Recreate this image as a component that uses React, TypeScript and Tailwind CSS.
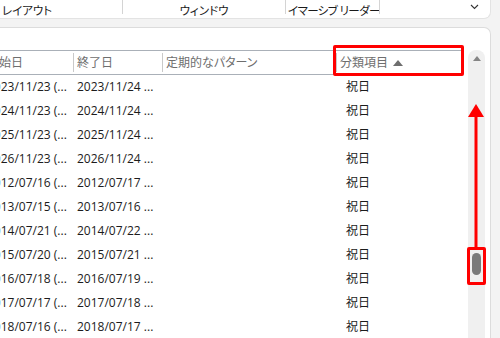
import React from 'react';

const rows = [
  ['2023/11/23', '2023/11/24'],
  ['2024/11/23', '2024/11/24'],
  ['2025/11/23', '2025/11/24'],
  ['2026/11/23', '2026/11/24'],
  ['2012/07/16', '2012/07/17'],
  ['2013/07/15', '2013/07/16'],
  ['2014/07/21', '2014/07/22'],
  ['2015/07/20', '2015/07/21'],
  ['2016/07/18', '2016/07/19'],
  ['2017/07/17', '2017/07/18'],
  ['2018/07/16', '2018/07/17'],
];

const font = "font-['Open_Sans','Noto_Sans_CJK_JP',sans-serif] [font-feature-settings:'palt']";

const HeaderCell = ({ label, w, divider = true, children }: { label: string; w: string; divider?: boolean; children?: React.ReactNode }) => (
  <div className={`${w} h-full flex items-center shrink-0`}>
    {divider ? <div className="w-px h-[19px] bg-[#c9c9c9]" /> : <div className="w-px" />}
    <span className="pl-[3px] text-[#6e6e6e] whitespace-nowrap">{label}</span>
    {children}
  </div>
);

export default function App() {
  return (
    <div className={`w-[500px] h-[338px] overflow-hidden bg-[#f3f3f3] relative text-[12px] ${font}`}>
      {/* ribbon tail */}
      <div className="w-[491px] h-[19px] bg-white rounded-br-[7px] border-b border-r border-[#e3e3e3] flex items-start text-[#1a1a1a] text-[11.5px]">
        <div className="w-[122px] pl-[2px] pt-[3px] leading-[15px]">レイアウト</div>
        <div className="w-px h-[14px] bg-[#d4d4d4]" />
        <div className="w-[162px] text-center pt-[3px] leading-[15px]">ウィンドウ</div>
        <div className="w-px h-[14px] bg-[#d4d4d4]" />
        <div className="w-[93px] pl-[2px] pt-[3px] leading-[15px] whitespace-nowrap tracking-[-0.6px] overflow-hidden">イマーシブ リーダー</div>
        <div className="w-px h-[14px] bg-[#d4d4d4]" />
        <div className="flex-1 flex justify-end pr-[11px] pt-[4px]">
          <svg width="9" height="6" viewBox="0 0 9 6">
            <path d="M1 1 L4.5 4.5 L8 1" fill="none" stroke="#333" strokeWidth="1.1" />
          </svg>
        </div>
      </div>

      {/* list panel */}
      <div className="mt-[8px] w-[491px] h-[320px] bg-white rounded-tr-[7px] border-t border-r border-[#dcdcdc] flex">
        <div className="w-[461px] pt-[22px] overflow-hidden">
          <div className="ml-[-17px] w-[478px]">
            <div className="h-[25px] flex border-t border-b border-[#aab0b8]">
              <HeaderCell label="開始日" w="w-[90px]" divider={false} />
              <HeaderCell label="終了日" w="w-[89px]" />
              <HeaderCell label="定期的なパターン" w="w-[174px]" />
              <HeaderCell label="分類項目" w="w-[125px]">
                <svg width="10" height="6" viewBox="0 0 10 6" className="ml-[5px]">
                  <path d="M5 0 L10 6 L0 6 Z" fill="#6e6e6e" />
                </svg>
              </HeaderCell>
            </div>
            {rows.map(([s, e]) => (
              <div key={s} className="h-[24px] flex items-center text-[#1c1c1c] whitespace-nowrap">
                <div className="w-[90px] pl-[4px] shrink-0">{s} (...</div>
                <div className="w-[89px] pl-[4px] shrink-0">{e} ...</div>
                <div className="w-[174px] shrink-0" />
                <div className="w-[125px] pl-[10px] shrink-0">祝日</div>
              </div>
            ))}
          </div>
        </div>
        <div className="w-[7px]" />
        <div className="w-[17px] mt-[22px] bg-[#f0f0f0] rounded-t-[8px] flex flex-col items-center">
          <svg width="8" height="5" viewBox="0 0 8 5" className="mt-[6px]">
            <path d="M4 0 L8 5 L0 5 Z" fill="#858585" />
          </svg>
          <div className="mt-[192px] w-[9px] h-[22px] rounded-full bg-[#7a7a7a]" />
        </div>
      </div>

      {/* annotations */}
      <div className="absolute left-[333px] top-[45px] w-[131px] h-[31px] border-[3px] border-[#ff0000] rounded-[2px]" />
      <div className="absolute left-[467px] top-[247px] w-[19px] h-[38px] border-[3px] border-[#ff0000] rounded-[2px]" />
      <svg className="absolute left-[466px] top-[103px]" width="20" height="145" viewBox="0 0 20 145">
        <path d="M10 1 L18 14 L2 14 Z" fill="#ff0000" />
        <rect x="8.5" y="13" width="3" height="132" fill="#ff0000" />
      </svg>
    </div>
  );
}
